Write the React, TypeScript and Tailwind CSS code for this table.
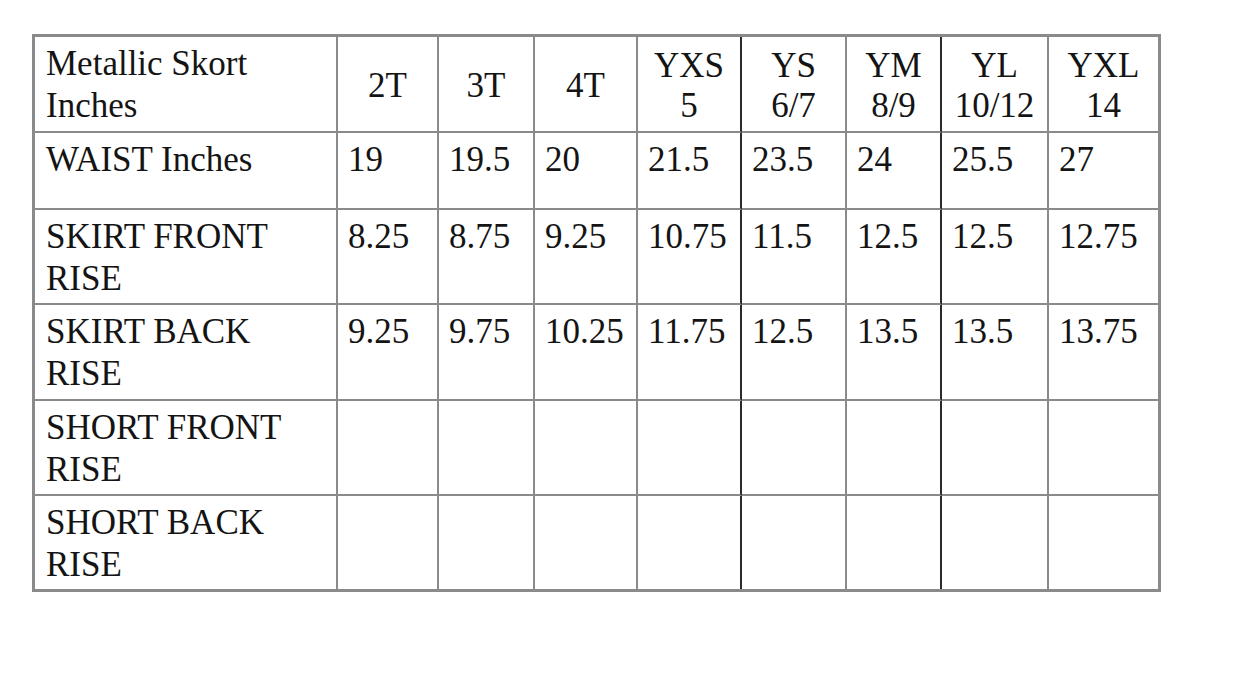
const sizes = [
  ['2T'],
  ['3T'],
  ['4T'],
  ['YXS', '5'],
  ['YS', '6/7'],
  ['YM', '8/9'],
  ['YL', '10/12'],
  ['YXL', '14'],
];

const rows: { label: string[]; values: string[]; h: string }[] = [
  { label: ['WAIST Inches'], values: ['19', '19.5', '20', '21.5', '23.5', '24', '25.5', '27'], h: 'h-[77px]' },
  { label: ['SKIRT FRONT', 'RISE'], values: ['8.25', '8.75', '9.25', '10.75', '11.5', '12.5', '12.5', '12.75'], h: 'h-[95px]' },
  { label: ['SKIRT BACK', 'RISE'], values: ['9.25', '9.75', '10.25', '11.75', '12.5', '13.5', '13.5', '13.75'], h: 'h-[96px]' },
  { label: ['SHORT FRONT', 'RISE'], values: ['', '', '', '', '', '', '', ''], h: 'h-[95px]' },
  { label: ['SHORT BACK', 'RISE'], values: ['', '', '', '', '', '', '', ''], h: 'h-[93px]' },
];

// columns 3 (YXS) and 5 (YM) have a dark right rule in the source
const rightBorder = (i: number) => {
  if (i === 7) return 'border-r-0';
  if (i === 3 || i === 5) return 'border-r-2 border-r-[#2a2a2a]';
  return 'border-r-2 border-r-[#8a8a8a]';
};

export default function App() {
  return (
    <div className="min-h-[678px] w-[1238px] bg-white pt-[34px] pl-[32px] font-['Liberation_Serif','Times_New_Roman',serif] text-[#141414]">
      <table className="w-[1129px] table-fixed border-separate border-spacing-0 border-[3px] border-[#8a8a8a] text-[35px] leading-[42px]">
        <colgroup>
          <col className="w-[303px]" />
          <col className="w-[101px]" />
          <col className="w-[96px]" />
          <col className="w-[103px]" />
          <col className="w-[104px]" />
          <col className="w-[105px]" />
          <col className="w-[95px]" />
          <col className="w-[107px]" />
          <col className="w-[109px]" />
        </colgroup>
        <thead>
          <tr>
            <th className="h-[96px] border-r-2 border-b-2 border-[#8a8a8a] pl-[11px] pt-[6px] text-left align-top font-normal">
              Metallic Skort
              <br />
              Inches
            </th>
            {sizes.map((s, i) => (
              <th key={i} className={`border-b-2 border-b-[#8a8a8a] pt-[4px] text-center align-middle font-normal ${rightBorder(i)}`}>
                {s.map((line, j) => (
                  <div key={j} className="leading-[40px]">{line}</div>
                ))}
              </th>
            ))}
          </tr>
        </thead>
        <tbody>
          {rows.map((r, ri) => {
            const last = ri === rows.length - 1;
            const bottom = last ? 'border-b-0' : 'border-b-2 border-b-[#8a8a8a]';
            return (
              <tr key={ri}>
                <td className={`${r.h} border-r-2 border-r-[#8a8a8a] ${bottom} pl-[11px] pt-[6px] align-top`}>
                  {r.label.map((l, j) => (
                    <div key={j}>{l}</div>
                  ))}
                </td>
                {r.values.map((v, i) => (
                  <td key={i} className={`${bottom} ${rightBorder(i)} pl-[10px] pt-[6px] align-top`}>
                    {v}
                  </td>
                ))}
              </tr>
            );
          })}
        </tbody>
      </table>
    </div>
  );
}
